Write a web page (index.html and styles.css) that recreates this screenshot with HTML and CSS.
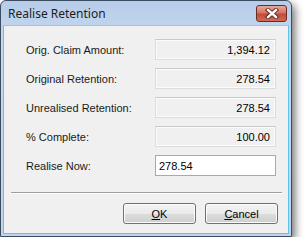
FILE: index.html
```html
<!DOCTYPE html>
<html lang="en">
<head>
    <meta charset="UTF-8">
    <title>Realise Retention</title>
    <link rel="stylesheet" href="styles.css">
</head>
<body>
    <div class="window">
        <div class="titlebar">
            <span class="title">Realise Retention</span>
            <button class="close" title="Close">
                <svg width="14" height="11" viewBox="0 0 14 11">
                    <path d="M3 2 L11 9 M11 2 L3 9" stroke="#5a1d16" stroke-width="4.2" stroke-linecap="square"/>
                    <path d="M3 2 L11 9 M11 2 L3 9" stroke="#ffffff" stroke-width="2.4" stroke-linecap="square"/>
                </svg>
            </button>
        </div>
        <div class="client">
            <div class="fields">
                <label>Orig. Claim Amount:</label>
                <div class="box readonly">1,394.12</div>
                <label>Original Retention:</label>
                <div class="box readonly">278.54</div>
                <label>Unrealised Retention:</label>
                <div class="box readonly">278.54</div>
                <label>% Complete:</label>
                <div class="box readonly">100.00</div>
                <label for="realiseNow">Realise Now:</label>
                <input id="realiseNow" class="box edit" value="278.54">
            </div>
            <div class="separator"></div>
            <div class="buttons">
                <button class="btn"><u>O</u>K</button>
                <button class="btn"><u>C</u>ancel</button>
            </div>
        </div>
    </div>
</body>
</html>
```

FILE: styles.css
```css
body {
    margin: 0;
    background: #ffffff;
    font-family: "Liberation Sans", Arial, sans-serif;
    font-size: 11px;
    color: #000;
}
.window {
    width: 290px;
    height: 235px;
    border: 1px solid #3c4c60;
    border-radius: 6px 6px 0 0;
    background: linear-gradient(#b7cde8, #c5d9ef 40px, #c0d5ed);
    box-shadow: 3px 4px 9px rgba(0, 0, 0, 0.55);
    display: flex;
    flex-direction: column;
}
.titlebar {
    height: 24px;
    display: flex;
    align-items: center;
    justify-content: space-between;
    padding: 0 4px 0 7px;
}
.title {
    font-family: "Noto Sans", "Open Sans", sans-serif;
    font-size: 12px;
    color: #1e1e1e;
    padding-top: 1px;
}
.close {
    width: 31px;
    height: 17px;
    margin-top: 1px;
    padding: 0;
    border: 1px solid #6b2a22;
    border-radius: 3px;
    background: linear-gradient(#e8a99c, #d57565 45%, #c24b39 55%, #d36c52);
    display: flex;
    align-items: center;
    justify-content: center;
}
.client {
    flex: 1;
    margin: 0 2px 2px 2px;
    border: 1px solid #5fc4ea;
    border-top: 1px solid #a9c0dc;
    background: #f0f0f0;
    padding: 13px 0 0 0;
}
.fields {
    display: grid;
    grid-template-columns: 129px 121px;
    grid-auto-rows: 21px;
    row-gap: 8px;
    padding-left: 22px;
    align-items: center;
}
label {
    color: #1a1a1a;
}
.box {
    box-sizing: border-box;
    height: 21px;
    font-family: "Liberation Sans", Arial, sans-serif;
    font-size: 11px;
    padding: 0 5px;
    display: flex;
    align-items: center;
}
.readonly {
    justify-content: flex-end;
    border: 1px solid #dcdcdc;
    border-top-color: #c9c9c9;
    box-shadow: inset 0 0 0 1px #fbfbfb;
    background: #f0f0f0;
}
.edit {
    width: 121px;
    border: 1px solid #7fb2e5;
    background: #fff;
    padding-left: 3px;
    outline: none;
}
.separator {
    margin: 16px 6px 0 7px;
    border-top: 1px solid #a0a0a0;
    border-bottom: 1px solid #ffffff;
}
.buttons {
    display: flex;
    justify-content: flex-end;
    gap: 9px;
    padding: 9px 10px 0 0;
}
.btn {
    width: 73px;
    height: 21px;
    padding: 0;
    font-family: "Liberation Sans", Arial, sans-serif;
    font-size: 11px;
    color: #000;
    border: 1px solid #707070;
    border-radius: 3px;
    background: linear-gradient(#f2f2f2, #ebebeb 50%, #dddddd 51%, #cfcfcf);
    box-shadow: inset 0 0 0 1px #fcfcfc;
}
```
